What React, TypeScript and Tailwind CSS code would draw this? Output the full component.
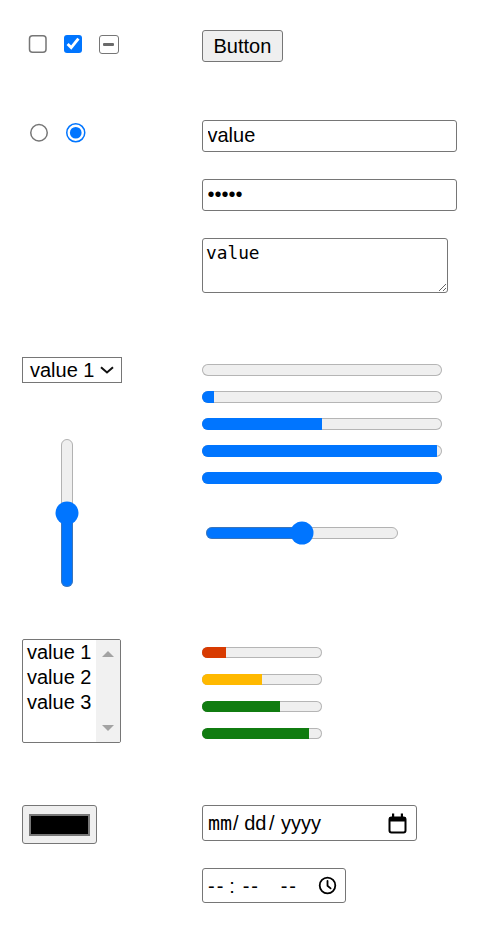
import React from "react";

function Chevron() {
  return (
    <svg width="14" height="8" viewBox="0 0 14 8" className="ml-auto mr-[7px]">
      <path d="M1 1.2 L7 6.5 L13 1.2" fill="none" stroke="#111" strokeWidth="2" />
    </svg>
  );
}

function Bar({ value, color, width, height }: { value: number; color: string; width: number; height: number }) {
  return (
    <div
      role="progressbar"
      aria-valuenow={value}
      className="overflow-hidden rounded-full bg-[#efefef] shadow-[inset_0_0_0_1px_#b5b5b5]"
      style={{ width, height }}
    >
      <div className="h-full" style={{ width: `${value}%`, backgroundColor: color }} />
    </div>
  );
}

function CalendarIcon() {
  return (
    <svg width="19" height="21" viewBox="0 0 19 21" className="ml-auto shrink-0">
      <rect x="1.5" y="4.5" width="16" height="15" rx="2" fill="none" stroke="#000" strokeWidth="2" />
      <rect x="1" y="4" width="17" height="4.5" rx="1.5" fill="#000" />
      <rect x="4" y="0.5" width="2.2" height="5" fill="#000" />
      <rect x="12.8" y="0.5" width="2.2" height="5" fill="#000" />
    </svg>
  );
}

function ClockIcon() {
  return (
    <svg width="19" height="19" viewBox="0 0 19 19" className="ml-auto mr-[8px] shrink-0">
      <circle cx="9.5" cy="9.5" r="7.8" fill="none" stroke="#000" strokeWidth="1.8" />
      <path d="M9.5 5 V9.8 L12.6 12.4" fill="none" stroke="#000" strokeWidth="1.8" strokeLinecap="round" strokeLinejoin="round" />
    </svg>
  );
}

export default function App() {
  return (
    <div className="min-h-[928px] bg-white pl-[22px] pt-[30px] font-['Liberation_Sans',Arial,sans-serif] text-black">
      {/* Section 1 */}
      <div className="flex h-[90px]">
        <div className="flex w-[180px] items-start gap-[16px] pl-[6px] pt-[4.5px]">
          <input type="checkbox" className="[zoom:1.5]" />
          <input type="checkbox" defaultChecked className="[zoom:1.5]" />
          <span
            role="checkbox"
            aria-checked="mixed"
            className="box-border flex h-[19.5px] w-[19.5px] items-center justify-center rounded-[3px] border-[1.5px] border-[#767676] bg-white"
          >
            <span className="h-[3px] w-[11px] rounded-[1px] bg-[#6a6a6a]" />
          </span>
        </div>
        <div>
          <button className="box-border h-[21.333px] rounded-[2px] border border-[#767676] bg-[#efefef] px-[7px] text-[13.333px] leading-none [zoom:1.5]">
            Button
          </button>
        </div>
      </div>

      {/* Section 2 */}
      <div className="flex h-[237px]">
        <div className="flex w-[180px] items-start gap-[17px] pl-[7.5px] pt-[3px]">
          <input type="radio" name="r" className="[zoom:1.5]" />
          <input type="radio" name="r" defaultChecked className="[zoom:1.5]" />
        </div>
        <div className="flex flex-col items-start gap-[27px]">
          <input
            type="text"
            defaultValue="value"
            className="box-border h-[21.333px] w-[170px] rounded-[2px] border border-[#767676] bg-white px-[3px] text-[13.333px] [zoom:1.5]"
          />
          <input
            type="password"
            defaultValue="12345"
            className="box-border h-[21.333px] w-[170px] rounded-[2px] border border-[#767676] bg-white px-[3px] text-[13.333px] [zoom:1.5]"
          />
          <textarea
            defaultValue="value"
            className="box-border h-[36.667px] w-[164px] rounded-[2px] border border-[#767676] bg-white px-[2px] pt-[2px] pb-[1px] font-['DejaVu_Sans_Mono',monospace] text-[11.867px] leading-[normal] [zoom:1.5]"
          />
        </div>
      </div>

      {/* Section 3 */}
      <div className="flex h-[282px]">
        <div className="flex w-[180px] flex-col items-start">
          <div className="box-border flex h-[26px] w-[100px] items-center border border-[#767676] pl-[7px] text-[20px] leading-none">
            <span>value 1</span>
            <Chevron />
          </div>
          <div className="mt-[55px] pl-[33px]">
            <input
              type="range"
              defaultValue={50}
              className="h-[100px] w-[16px] [direction:rtl] [writing-mode:vertical-lr] [zoom:1.5]"
            />
          </div>
        </div>
        <div className="flex flex-col items-start pt-[7px]">
          <div className="flex flex-col gap-[15px]">
            <Bar value={0} color="#0075ff" width={240} height={12} />
            <Bar value={5} color="#0075ff" width={240} height={12} />
            <Bar value={50} color="#0075ff" width={240} height={12} />
            <Bar value={98} color="#0075ff" width={240} height={12} />
            <Bar value={100} color="#0075ff" width={240} height={12} />
          </div>
          <div className="mt-[37px] pl-[3px]">
            <input type="range" defaultValue={50} className="h-[16px] w-[129px] [zoom:1.5]" />
          </div>
        </div>
      </div>

      {/* Section 4 */}
      <div className="flex h-[166px]">
        <div className="w-[180px]">
          <div className="box-border flex h-[104px] w-[99px] overflow-hidden rounded-[2px] border-[1.5px] border-[#767676] text-[20px] leading-[25px]">
            <div className="flex-1 pl-[4px]">
              <div>value 1</div>
              <div>value 2</div>
              <div>value 3</div>
            </div>
            <div className="flex w-[24px] flex-col items-center justify-between bg-[#f1f1f1] py-[11px]">
              <svg width="12" height="6" viewBox="0 0 12 6">
                <path d="M0 6 L6 0 L12 6 Z" fill="#a3a3a3" />
              </svg>
              <svg width="12" height="6" viewBox="0 0 12 6">
                <path d="M0 0 L12 0 L6 6 Z" fill="#a3a3a3" />
              </svg>
            </div>
          </div>
        </div>
        <div className="flex flex-col gap-[16px] pt-[8px]">
          <Bar value={20} color="#d83b01" width={120} height={11} />
          <Bar value={50} color="#ffb900" width={120} height={11} />
          <Bar value={65} color="#107c10" width={120} height={11} />
          <Bar value={89} color="#107c10" width={120} height={11} />
        </div>
      </div>

      {/* Section 5 */}
      <div className="flex">
        <div className="w-[180px]">
          <div className="box-border flex h-[39px] w-[75px] items-center justify-center rounded-[3px] border border-[#767676] bg-[#efefef]">
            <div className="box-border h-[22px] w-[61px] border-2 border-[#777777] bg-black" />
          </div>
        </div>
        <div className="flex flex-col items-start gap-[27px]">
          <div
            role="textbox"
            aria-label="date"
            className="box-border flex h-[36px] w-[215px] items-center rounded-[3px] border border-[#767676] bg-white pl-[5px] pr-[9px] text-[20px] leading-none"
          >
            <span className="whitespace-pre">
              <span className="font-['DejaVu_Sans_Mono',monospace]">mm</span>
              <span className="ml-[1px]">/</span>
              <span className="ml-[5.5px]">dd</span>
              <span className="ml-[2.6px]">/</span>
              <span className="ml-[6.4px]">yyyy</span>
            </span>
            <CalendarIcon />
          </div>
          <div
            role="textbox"
            aria-label="time"
            className="box-border flex h-[35px] w-[144px] items-center rounded-[3px] border border-[#767676] bg-white pl-[5px] text-[20px] leading-none"
          >
            <span className="whitespace-pre">
              <span className="tracking-[2px]">--</span>
              <span className="ml-[4px]">:</span>
              <span className="ml-[7.8px] tracking-[2px]">--</span>
              <span className="ml-[20.7px] tracking-[2px]">--</span>
            </span>
            <ClockIcon />
          </div>
        </div>
      </div>
    </div>
  );
}
